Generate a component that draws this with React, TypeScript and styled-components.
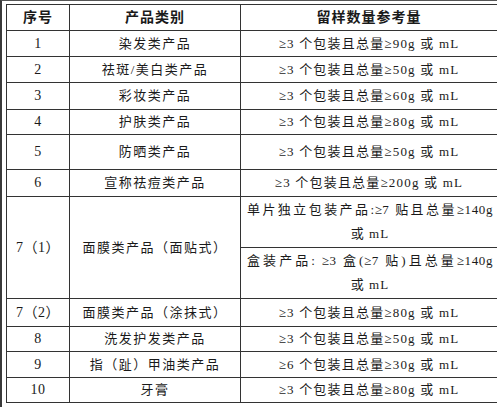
import React from 'react';
import styled, { createGlobalStyle } from 'styled-components';

const GlobalStyle = createGlobalStyle`
  html, body {
    margin: 0;
    padding: 0;
    background: #fff;
  }
  body {
    font-family: "Liberation Serif", "Noto Sans CJK SC", serif;
    color: #1a1a1a;
  }
`;

const Page = styled.div`
  width: 497px;
  height: 407px;
  box-sizing: border-box;
  border-left: 2px solid #3a3a3a;
  border-top: 1px solid #555;
  padding: 3px 0 0 4px;
  overflow: hidden;
`;

const Table = styled.table`
  border-collapse: collapse;
  table-layout: fixed;
  width: 488px;
`;

const Row = styled.tr<{ h: number }>`
  height: ${p => p.h}px;
`;

const HeadCell = styled.th<{ w: number }>`
  width: ${p => p.w}px;
  border: 1px solid #333;
  padding: 0;
  font-size: 14px;
  line-height: 16px;
  font-weight: bold;
  letter-spacing: 1px;
  text-align: center;
  vertical-align: middle;
`;

const Cell = styled.td<{ spacing?: number }>`
  border: 1px solid #333;
  padding: 0 4px;
  font-size: 13px;
  line-height: 16px;
  letter-spacing: ${p => p.spacing ?? 1.2}px;
  text-align: center;
  vertical-align: middle;
  white-space: nowrap;
`;

const NumCell = styled(Cell)`
  font-size: 14px;
  letter-spacing: 0.5px;
`;

const SubCell = styled.td`
  border: 1px solid #333;
  height: 50px;
  padding: 0 4px 0 6px;
  font-size: 13px;
  vertical-align: middle;
`;

const Line = styled.div<{ full?: boolean }>`
  line-height: 24px;
  white-space: nowrap;
  text-align: ${p => (p.full ? 'justify' : 'center')};
  text-align-last: ${p => (p.full ? 'justify' : 'center')};
  letter-spacing: ${p => (p.full ? 0.6 : 1)}px;
`;

type Item = { no: string; name: string; amount: string; h: number };

const rowsTop: Item[] = [
  { no: '1', name: '染发类产品', amount: '≥3 个包装且总量≥90g 或 mL', h: 26 },
  { no: '2', name: '祛斑/美白类产品', amount: '≥3 个包装且总量≥50g 或 mL', h: 26 },
  { no: '3', name: '彩妆类产品', amount: '≥3 个包装且总量≥60g 或 mL', h: 27 },
  { no: '4', name: '护肤类产品', amount: '≥3 个包装且总量≥80g 或 mL', h: 25 },
  { no: '5', name: '防晒类产品', amount: '≥3 个包装且总量≥50g 或 mL', h: 35 },
  { no: '6', name: '宣称祛痘类产品', amount: '≥3 个包装且总量≥200g 或 mL', h: 27 },
];

const rowsBottom: Item[] = [
  { no: '7（2）', name: '面膜类产品（涂抹式）', amount: '≥3 个包装且总量≥80g 或 mL', h: 28 },
  { no: '8', name: '洗发护发类产品', amount: '≥3 个包装且总量≥50g 或 mL', h: 25 },
  { no: '9', name: '指（趾）甲油类产品', amount: '≥6 个包装且总量≥30g 或 mL', h: 26 },
  { no: '10', name: '牙膏', amount: '≥3 个包装且总量≥80g 或 mL', h: 25 },
];

const ItemRow = ({ item }: { item: Item }) => (
  <Row h={item.h}>
    <NumCell>{item.no}</NumCell>
    <Cell spacing={1.5}>{item.name}</Cell>
    <Cell>{item.amount}</Cell>
  </Row>
);

export default function App() {
  return (
    <>
      <GlobalStyle />
      <Page>
        <Table>
          <thead>
            <Row h={26}>
              <HeadCell w={62}>序号</HeadCell>
              <HeadCell w={170}>产品类别</HeadCell>
              <HeadCell w={256}>留样数量参考量</HeadCell>
            </Row>
          </thead>
          <tbody>
            {rowsTop.map(item => (
              <ItemRow key={item.no} item={item} />
            ))}
            <tr>
              <NumCell rowSpan={2}>7（1）</NumCell>
              <Cell rowSpan={2} spacing={1.5}>面膜类产品（面贴式）</Cell>
              <SubCell>
                <Line full>单片独立包装产品:≥7 贴且总量≥140g</Line>
                <Line>或 mL</Line>
              </SubCell>
            </tr>
            <tr>
              <SubCell>
                <Line full>盒装产品: ≥3 盒(≥7 贴)且总量≥140g</Line>
                <Line>或 mL</Line>
              </SubCell>
            </tr>
            {rowsBottom.map(item => (
              <ItemRow key={item.no} item={item} />
            ))}
          </tbody>
        </Table>
      </Page>
    </>
  );
}
